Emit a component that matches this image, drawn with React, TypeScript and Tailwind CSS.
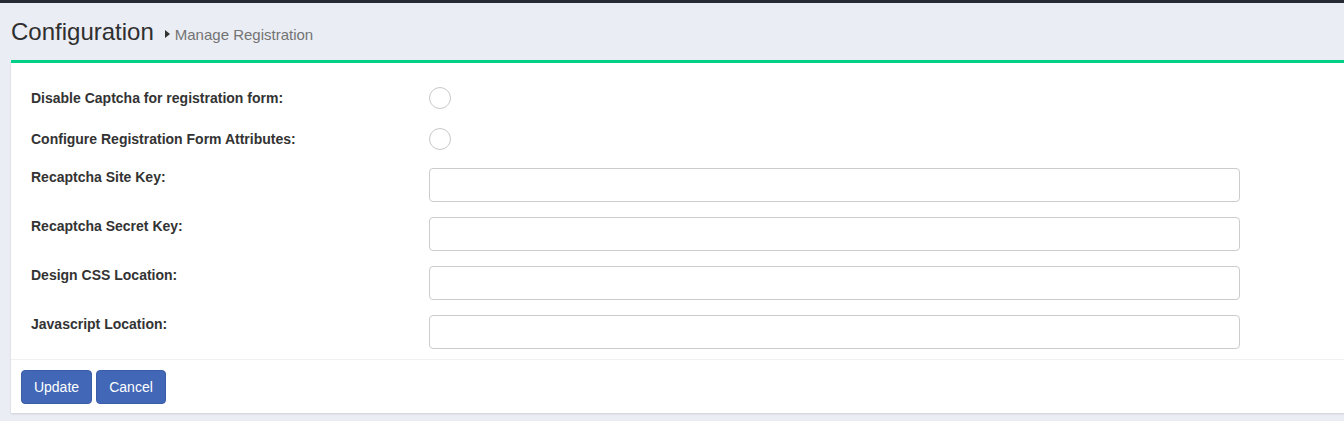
import React from 'react'

const font = { fontFamily: '"Liberation Sans", Arial, sans-serif' }

const ToggleRow: React.FC<{ label: string; className?: string }> = ({ label, className }) => (
  <div className={`flex items-center h-[22px] ${className ?? ''}`}>
    <label className="w-[398px] text-[14px] font-bold text-[#333] leading-5">{label}</label>
    <span className="w-[22px] h-[22px] rounded-full border border-[#c8c8c8] bg-white" />
  </div>
)

const InputRow: React.FC<{ label: string; className?: string }> = ({ label, className }) => (
  <div className={`flex items-start h-[34px] ${className ?? ''}`}>
    <label className="w-[398px] -mt-px text-[14px] font-bold text-[#333] leading-5">{label}</label>
    <input
      type="text"
      className="w-[811px] h-[34px] rounded-[4px] border border-[#cccccc] bg-white px-3 text-[14px] outline-none"
    />
  </div>
)

export default function App() {
  return (
    <div className="w-full h-[421px] overflow-hidden bg-[#eaedf4]" style={font}>
      <div className="h-[3px] bg-[#262b33]" />
      <div className="flex items-baseline pl-[11px] pt-[16px] h-[57px]">
        <h1 className="text-[24px] leading-[26px] text-[#2f2f2f] font-normal">Configuration</h1>
        <span className="ml-[11px] mr-[5px] inline-block w-0 h-0 border-y-[4px] border-y-transparent border-l-[5px] border-l-[#333] -translate-y-[2px]" />
        <span className="text-[15px] text-[#737373]">Manage Registration</span>
      </div>
      <div className="ml-[11px] -mr-[20px] bg-white border-t-[3px] border-[#00cf85] shadow-[0_1px_2px_rgba(0,0,0,0.12)]">
        <div className="pl-[20px] pt-[24px] pb-[10px]">
          <ToggleRow label="Disable Captcha for registration form:" className="mb-[19px]" />
          <ToggleRow label="Configure Registration Form Attributes:" className="mb-[18px]" />
          <InputRow label="Recaptcha Site Key:" className="mb-[15px]" />
          <InputRow label="Recaptcha Secret Key:" className="mb-[15px]" />
          <InputRow label="Design CSS Location:" className="mb-[15px]" />
          <InputRow label="Javascript Location:" />
        </div>
        <div className="border-t border-[#f0f0f0] pl-[10px] pt-[10px] pb-[9px] flex gap-[4px]">
          <button className="w-[71px] h-[34px] rounded-[4px] bg-[#4267b6] border border-[#3b5ca6] text-white text-[14px]">
            Update
          </button>
          <button className="w-[70px] h-[34px] rounded-[4px] bg-[#4267b6] border border-[#3b5ca6] text-white text-[14px]">
            Cancel
          </button>
        </div>
      </div>
    </div>
  )
}
